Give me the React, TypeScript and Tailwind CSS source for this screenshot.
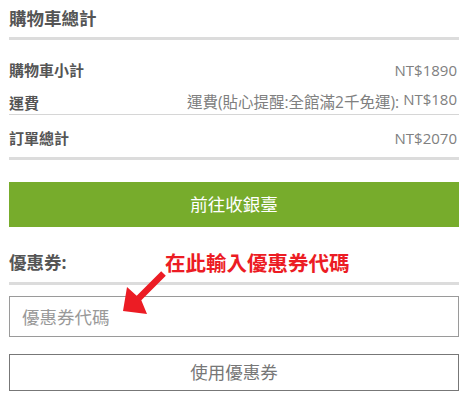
import React from "react";

const cjk = { fontFamily: '"Open Sans", "Noto Sans CJK TC", sans-serif' };

export default function App() {
  return (
    <div className="relative w-[471px] h-[412px] bg-white" style={cjk}>
      <div className="ml-[9px] w-[450px] flex flex-col">
        <div className="h-[37px] flex items-center text-[17.5px] font-bold text-[#555]">購物車總計</div>
        <div className="h-[3px] bg-[#dcdcdc]" />
        <div className="h-[52px] pt-[9px] flex items-center justify-between">
          <span className="text-[15px] font-bold text-[#555]">購物車小計</span>
          <span className="text-[15px] text-[#808080] mr-[2px]">NT$1890</span>
        </div>
        <div className="h-[23px] border-b border-[#d6d6d6] flex items-center justify-between">
          <span className="text-[15px] font-bold text-[#555]">運費</span>
          <span className="text-[15.5px] text-[#808080] mr-[2px]">
            運費(貼心提醒:全館滿2千免運): <span className="relative -top-[3px] text-[15px]">NT$180</span>
          </span>
        </div>
        <div className="h-[42px] pt-[4px] flex items-center justify-between">
          <span className="text-[15px] font-bold text-[#555]">訂單總計</span>
          <span className="text-[15px] text-[#808080] mr-[2px]">NT$2070</span>
        </div>
        <div className="h-[3px] bg-[#dcdcdc]" />
        <button className="mt-[22px] h-[45px] bg-[#77ac2c] text-white text-[17.5px] flex items-center justify-center">
          前往收銀臺
        </button>
        <div className="mt-[24px] h-[22px] flex items-center text-[17.5px] font-bold text-[#555]">優惠券:</div>
        <div className="mt-[9px] h-[3px] bg-[#dcdcdc]" />
        <input
          className="mt-[11px] h-[41px] border border-[#9a9a9a] pl-[12px] text-[17.5px] outline-none placeholder:text-[#999]"
          placeholder="優惠券代碼"
          style={cjk}
        />
        <button className="mt-[17px] h-[37px] border border-[#777] text-[#777] text-[17.5px] flex items-center justify-center bg-white">
          使用優惠券
        </button>
      </div>
      <div className="absolute left-[165px] top-[250px] text-[20.5px] font-bold text-[#ec1c24] leading-[26px] whitespace-nowrap">
        在此輸入優惠券代碼
      </div>
      <svg className="absolute left-0 top-0" width="471" height="412" viewBox="0 0 471 412" style={{ pointerEvents: "none" }}>
        <path
          d="M161.2 271.2 L165.8 275.8 L141.3 300.3 L147 314 L123 311 L127 287 L136.7 295.7 Z"
          fill="#ec1c24"
        />
      </svg>
    </div>
  );
}
